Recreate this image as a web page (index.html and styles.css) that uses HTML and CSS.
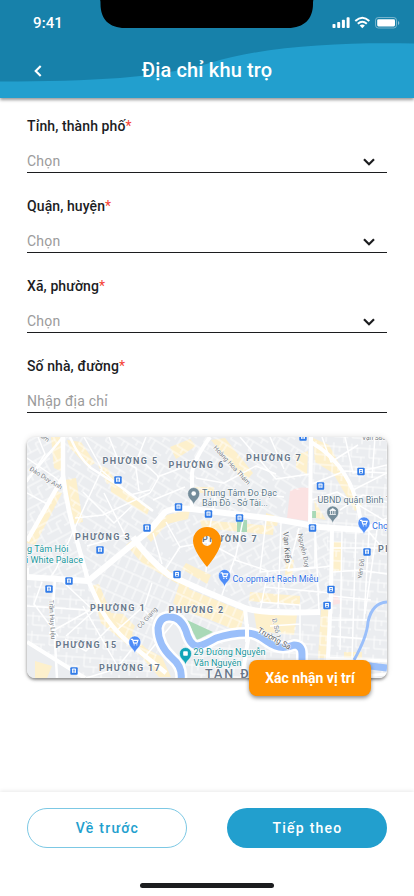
FILE: index.html
```html
<!DOCTYPE html>
<html lang="vi">
<head>
<meta charset="utf-8">
<meta name="viewport" content="width=device-width, initial-scale=1">
<title>Địa chỉ khu trọ</title>
<link rel="stylesheet" href="styles.css">
</head>
<body>
<div class="screen">
  <header class="header">
    <svg class="wave" viewBox="0 0 414 98" aria-hidden="true"><path d="M0 0H414V43.5C340 42 265 46 210 63C158 78 92 81.5 0 81.5Z" fill="#1781AA"/></svg>
    <svg class="notch" viewBox="0 0 214 28" aria-hidden="true"><path d="M0 0H213.500Q213 0 213 4C213 19 204 28 188 28H25C9 28 .5 19 .5 4Q.5 0 0 0Z"/></svg>
    <div class="status">
      <span class="time">9:41</span>
      <svg class="indicators" width="68" height="14" viewBox="0 0 68 14" fill="#fff" aria-hidden="true">
        <rect x="0.5" y="8" width="3" height="4" rx=".8"/><rect x="5.2" y="6" width="3" height="6" rx=".8"/><rect x="9.9" y="3.7" width="3" height="8.3" rx=".8"/><rect x="14.6" y="1.3" width="3" height="10.7" rx=".8"/>
        <g fill="none" stroke="#fff" stroke-width="2"><path d="M23.3 5.1Q30.3-1.5 37.3 5.1"/><path d="M25.8 7.8Q30.3 3.7 34.8 7.8"/></g><path d="M27.7 9.6Q30.3 7.5 32.9 9.6L30.3 12.3Z"/>
        <rect x="43.5" y="1.5" width="21" height="10.5" rx="2.8" fill="none" stroke="#fff" stroke-opacity=".4"/><rect x="45.2" y="3.2" width="17.8" height="7.2" rx="1.3"/><path d="M66 5v4q1.3-.6 1.3-2T66 5" opacity=".5"/>
      </svg>
    </div>
    <div class="titlebar">
      <svg class="back" width="10" height="14" viewBox="0 0 10 14" aria-hidden="true"><path d="M7.7 2L2.700 7L7.700 12" fill="none" stroke="#fff" stroke-width="2.100"/></svg>
      <h1>Địa chỉ khu trọ</h1>
    </div>
  </header>

  <main class="form">
    <div class="field"><label>Tỉnh, thành phố<i>*</i></label><div class="control"><span>Chọn</span><svg width="14" height="10" viewBox="0 0 14 10"><path d="M2 2.2L7 7.2L12 2.2"/></svg></div></div>
    <div class="field"><label>Quận, huyện<i>*</i></label><div class="control"><span>Chọn</span><svg width="14" height="10" viewBox="0 0 14 10"><path d="M2 2.2L7 7.2L12 2.2"/></svg></div></div>
    <div class="field"><label>Xã, phường<i>*</i></label><div class="control"><span>Chọn</span><svg width="14" height="10" viewBox="0 0 14 10"><path d="M2 2.2L7 7.2L12 2.2"/></svg></div></div>
    <div class="field"><label>Số nhà, đường<i>*</i></label><div class="control"><span>Nhập địa chỉ</span></div></div>

    <div class="map-card">
      <svg class="map" viewBox="27 437 360 241" role="img" aria-label="Bản đồ">
        <defs>
          <pattern id="gridA" width="21" height="17" patternUnits="userSpaceOnUse" patternTransform="rotate(32)"><path d="M0 2H21M8 2V12H21M15 12V17M3 2V8" class="lane"/></pattern>
          <pattern id="gridB" width="19" height="20" patternUnits="userSpaceOnUse" patternTransform="rotate(-28)"><path d="M0 3H19M5 3V14M0 14H13M13 8V20M13 8H19" class="lane"/></pattern>
          <pattern id="gridC" width="18" height="19" patternUnits="userSpaceOnUse" patternTransform="rotate(4)"><path d="M0 4H18M4 0V13H14V19M10 4V9M14 13H18" class="lane"/></pattern>
          <pattern id="gridD" width="9" height="13" patternUnits="userSpaceOnUse" patternTransform="rotate(24)"><path d="M0 2H9M4 2V13" class="lane"/></pattern>
          <g id="stop"><rect x="-3.7" y="-3.7" width="7.4" height="7.4" rx="1" fill="#317be8"/><rect x="-2" y="-2.4" width="4" height="4.3" rx=".6" fill="#fff"/><path d="M-1.2-.8H1.2M-1.2 1H1.2" stroke="#317be8" stroke-width=".9"/></g>
          <path id="pin" d="M0 8.500C-1 3.500-6 2.500-6-3A6 6 0 0 1 6-3C6 2.500 1 3.500 0 8.500Z"/>
          <path id="cart" d="M-3.500-5.600H-2.300L-1.100-1.900H2.100L3.100-4.600H-1.800M-.7-.2h.1M2-.2h.1" fill="none" stroke="#fff" stroke-width="1.2" stroke-linecap="round"/>
        </defs>
        <rect x="27" y="437" width="360" height="241" fill="#ebedf0"/>

        <g fill="#fdf0cc">
          <path d="M51 437h9l3 35-9-4zM67 440l14 2 14 21-7 4-18-19zM65 480l11-2 7 44-9 2zM54 490l8 3-27 52-8-2v-6zM98 465l9 3 9 13-9 3zM110 481l40 26-3 8-36-23z"/>
          <path d="M170 447l20-8 6 7-20 13zM211 440l14-2 28 35-8 9zM194 487h20v6h-20zM146 536l21-21 23-5-2 9-21 5-16 18zM200 520l74 6-1 9-71-7zM131 541l15 15 45 28-3 6-46-27-16-18z"/>
          <path d="M313 438l16 7 33 61-7 5-22-38-18-11zM296 455l12-4-1 24-11-7zM266 513l13 4-2 9-11-1zM314 500l12 20-10-2z"/>
          <path d="M90 586l9-2 12 29 12 1 12 12-3 8 22 23-5 6-48-40zM35 661l17 5-5 12H35zM145 648l17 9 9 20h-12l-15-17z"/>
          <path d="M179 585l66 27-5 20-32-13-24-8-11-8zM250 592l50 4v9l-51-4zM254 613l43 2-3 20-37-4zM186 563l25 12-4 9-25-15zM321 610l8-1-3 49h-8zM333 542h9l-1 30h-9zM344 652h18v8h-18zM286 559l8 1-2 17-7-2z"/>
        </g>
        <path d="M290 491q9-5 19-3v33l-22-3zM334 592l8 11-9 2z" fill="#fbe2e2"/>

        <path d="M27 437h36l1 40-37 60z" fill="url(#gridB)"/>
        <path d="M64 437h128v68l-54 28-50 48-15-60z" fill="url(#gridA)"/>
        <path d="M27 537l37-58 25 102-62-4z" fill="url(#gridB)"/>
        <path d="M27 580l61 4 24 43 38 39v12H80l-53-36z" fill="url(#gridC)"/>
        <path d="M192 437h119v50l-24 5-2 25-93-6z" fill="url(#gridA)"/>
        <path d="M311 437h76v241h-60V527l-17-4z" fill="url(#gridC)"/>
        <path d="M90 582l50-45 105 72v28l-48 7-30-28-16 60z" fill="url(#gridD)"/>
        <path d="M155 531l37-16 139 12-2 84-84-3z" fill="url(#gridB)"/>
        <path d="M183 640l65 5 79-30v63H183z" fill="url(#gridC)"/>
        <path d="M237 520h10v12H237zM312 511h4v7h-4zM187 620L213 632L197 640Z" fill="#a9d9b7"/>

        <g fill="none" stroke="#fff" stroke-width="1.500" stroke-linejoin="round">
          <path d="M27 458l29 20 5 5M27 493l22 12M38 437l7 17-18 28M84 437l18 32-14 30-32 70-6 9M100 469l30 26 20-5M75 518l28-3 47-22M83 492l31 31 18-17M104 493l21 42-38 11"/>
          <path d="M109 437l8 20 19 11 3 23M146 437l-8 20 21 20-9 16M157 477l35-13M153 500l32-13M196 478l28 5 32-17 20 8M240 437l36 42 34-5M257 493l27 4M270 437l14 32M216 490l-3 22"/>
          <path d="M27 606l44 3 28 2M42 582l-8 22 24 32M62 581l30 28-43 24M66 636l31-28M83 606l35 61M111 626l-25 25-21-12M116 631l29-26 7-22M132 649l-16 20-30 9M144 658l35-42M140 606l13 13"/>
          <path d="M153 533l9 31M166 522l14 25-15 23M180 547l28-5-2 30M212 516l-5 26 28 15-13 38M243 520l-8 40 33 11-8 40M266 520l-6 52 55-5v-36M281 523l-3 85M299 528l-11 43 43-5M265 587l66 6M260 602l40 3v35M270 626l30-2M315 523l4 88"/>
          <path d="M333 548h54M333 572l26-2 28 4M342 531l-2 119M356 530l-4 130M369 531l-5 90M377 530l-12 84M333 596l38 4M330 620h37M329 636l38 3M312 484l33-13 42 2M322 437l9 25 27-17M345 437l8 36 34-8M353 490l34-17M340 510l23-15 24 7M312 500l25-8 50 30M375 437l-3 41M366 528l21-10M368 531l19 22"/>
        </g>
        <g fill="none" stroke="#fff" stroke-linejoin="round">
          <path d="M70 437Q79 458 91 468L121 487L153 511M55 580L53 606L57 678M27 480L63 437" stroke-width="2.500"/>
          <path d="M133 537Q147 558 169 575Q205 592 245 608Q260 614 320 612" stroke-width="6"/>
          <path d="M63 437V475Q66 501 73 527L88 580L102 611Q111 627 128 642L166 673M63 477L27 541" stroke-width="4.500"/>
          <path d="M27 577L88 581L123 552L150 530L165 512Q174 507 192 509L275 519L320 527L362 530L387 522" stroke-width="6"/>
          <path d="M192 509V473Q194 459 210 437M311 437L310 525M311 442Q333 455 345 475Q358 495 362 530M332 527L331 596L327 678M27 642L85 678M245 608L248 640L242 678M27 568V580" stroke-width="4"/>
          <path d="M327 658L387 661M340 678L387 674" stroke-width="3"/>
        </g>
        <g fill="none" stroke-linejoin="round">
          <path d="M181 680Q183 667 172 658Q158 645 158 628Q160 616 170 617Q181 617 186 631Q190 646 198 646Q204 645 216 638Q231 633 247 633Q257 633 268 642Q280 651 294 645Q302 645 302 654V664" stroke="#fff" stroke-width="12"/>
          <path d="M181 680Q183 667 172 658Q158 645 158 628Q160 616 170 617Q181 617 186 631Q190 646 198 646Q204 645 216 638Q231 633 247 633Q257 633 268 642Q280 651 294 645Q302 645 302 654V664" stroke="#9abffa" stroke-width="7"/>
          <path d="M387 602Q372 603 368 622Q367 637 354 660" stroke="#9abffa" stroke-width="3"/><path d="M355 664Q370 666 387 668" stroke="#9abffa" stroke-width="7"/>
          <path d="M247 624V642" stroke="#fff" stroke-width="4"/>
        </g>

        <g class="road-name">
          <text transform="translate(29 470) rotate(32)">Đào Duy Anh</text>
          <text transform="translate(40 437) rotate(36)">am</text>
          <text transform="translate(213 448) rotate(47)">Hoàng Hoa Thám</text>
          <text transform="translate(49 600) rotate(87)">Trần Huy Liệu</text>
          <text transform="translate(140 629) rotate(-48)">Cô Giang</text>
          <text class="strong" transform="translate(283 532) rotate(85)">Vạn Kiếp</text>
          <text transform="translate(298 534) rotate(78)">Nguyễn Duy</text>
          <text transform="translate(362 579) rotate(-83)">Yên Đỗ</text>
          <text transform="translate(272 619) rotate(77)">D. Số 1</text>
          <text class="strong" transform="translate(257 632) rotate(29)">Trường Sa</text>
          <text x="362" y="440">Vạn Sắc</text>
        </g>
        <g class="ward">
          <text x="102.500" y="463.500" textLength="56">PHƯỜNG 5</text>
          <text x="168.500" y="467.500" textLength="56">PHƯỜNG 6</text>
          <text x="246" y="461" textLength="56">PHƯỜNG 7</text>
          <text x="202" y="542" textLength="56">PHƯỜNG 7</text>
          <text x="75" y="540" textLength="56">PHƯỜNG 3</text>
          <text x="90" y="611" textLength="56">PHƯỜNG 1</text>
          <text x="168.500" y="612.500" textLength="56">PHƯỜNG 2</text>
          <text x="55.500" y="648" textLength="62">PHƯỜNG 15</text>
          <text x="99" y="671" textLength="62">PHƯỜNG 17</text>
          <text x="378" y="552">PH</text>
          <text class="district" x="205" y="678">TÂN Đ</text>
        </g>
        <g class="place">
          <text x="202" y="495.500" textLength="75">Trung Tâm Đo Đạc</text><text x="202" y="506" textLength="66">Bản Đồ - Sở Tài...</text>
          <text x="317.500" y="503" textLength="66">UBND quận Bình</text><text x="386" y="503">T</text>
          <g class="teal"><text x="22" y="552" textLength="46.500">ng Tâm Hội</text><text x="26" y="563" textLength="57">i White Palace</text><text x="193.500" y="655" textLength="72">29 Đường Nguyễn</text><text x="193.500" y="665.500" textLength="48">Văn Nguyên</text></g>
          <g class="shop"><text x="232.500" y="582" textLength="86">Co.opmart Rạch Miễu</text><text x="372" y="529">Chợ</text></g>
        </g>
        <use href="#stop" x="118" y="480"/><use href="#stop" x="147" y="528"/><use href="#stop" x="100" y="550"/><use href="#stop" x="178.500" y="507"/><use href="#stop" x="208.500" y="514"/><use href="#stop" x="239.500" y="518"/><use href="#stop" x="303" y="437"/><use href="#stop" x="361" y="471.500"/><use href="#stop" x="320.500" y="486"/><use href="#stop" x="312.500" y="528"/><use href="#stop" x="367" y="552"/><use href="#stop" x="177" y="574.500"/><use href="#stop" x="69" y="581"/><use href="#stop" x="49" y="589"/><use href="#stop" x="74" y="671"/><use href="#stop" x="331" y="589.500"/><use href="#stop" x="327" y="605.500"/>
        <g stroke="#fff" stroke-width=".5">
          <use href="#pin" x="193.700" y="496.500" fill="#748c9a"/><use href="#pin" x="332.700" y="515" fill="#748c9a"/>
          <use href="#pin" x="364" y="526" fill="#4f8df7"/><use href="#pin" x="224.500" y="578.500" fill="#4f8df7"/><use href="#pin" x="134.800" y="645" fill="#4f8df7"/>
          <use href="#pin" x="185.500" y="656.500" fill="#12a5b8"/>
        </g>
        <circle cx="193.700" cy="493.500" r="2.300" fill="#fff"/><path d="M329.700 510.500l3-2 3 2zM329.500 514.500h6.400M330.500 511v3m2.200-3v3m2.200-3v3" stroke="#fff" fill="#fff" stroke-width=".8"/>
        <use href="#cart" x="364" y="526"/><use href="#cart" x="224.500" y="578.500"/><use href="#cart" x="134.800" y="645"/><rect x="183.200" y="651.200" width="4.600" height="4.600" rx=".8" fill="#fff"/>
        <path fill="#ff9100" fill-rule="evenodd" d="M207 567C202 561 193 549 193 541A14 14 0 0 1 221 541C221 549 212 561 207 567ZM207 536a5 5 0 1 0 0 10a5 5 0 1 0 0-10Z"/>
      </svg>
      <button class="confirm">Xác nhận vị trí</button>
    </div>
  </main>

  <footer class="footer">
    <div class="actions"><button class="btn outline">Về trước</button><button class="btn primary">Tiếp theo</button></div>
    <div class="home"></div>
  </footer>
</div>
</body>
</html>
```
FILE: styles.css
```css
* { box-sizing: border-box; }
body { margin: 0; background: #fff; color: #1c1d1f; font-family: Roboto, "Liberation Sans", sans-serif; }
button { border: 0; padding: 0; font-family: inherit; }
.screen { width: 414px; height: 896px; display: flex; flex-direction: column; overflow: hidden; }

.header { position: relative; flex: none; height: 98px; background: #229fce; color: #fff; box-shadow: 0 2px 3px rgba(0, 0, 0, .4); }
.wave { position: absolute; top: 0; left: 0; width: 414px; height: 98px; }
.notch { position: absolute; top: 0; left: 100px; width: 214px; height: 28px; }
.status { position: relative; height: 46px; padding: 0 14px 0 33px; display: flex; justify-content: space-between; align-items: center; }
.time { font-size: 15px; font-weight: 500; letter-spacing: .1px; }
.indicators { display: block; }
.titlebar { position: relative; height: 48px; display: flex; align-items: center; justify-content: center; }
.titlebar h1 { margin: 0; font-size: 20px; font-weight: 500; letter-spacing: .15px; }
.back { position: absolute; left: 33px; top: 18px; }

.form { flex: 1; padding: 18px 27px 0; }
.field { height: 80px; }
.field label { display: block; font-size: 14px; font-weight: 500; line-height: 20px; letter-spacing: .1px; }
.field i { color: #f44336; font-style: normal; font-weight: 400; }
.control { height: 37px; padding: 15px 11px 0 0; display: flex; justify-content: space-between; border-bottom: 1px solid #1c1d1f; color: #9b9b9b; font-size: 14px; line-height: 20px; letter-spacing: .25px; }
.control svg { margin-top: 6px; fill: none; stroke: #1c1d1f; stroke-width: 2.2; }

.map-card { position: relative; width: 360px; height: 241px; margin-top: 1px; border-radius: 8px; box-shadow: 0 2px 3px rgba(0, 0, 0, .4), 0 0 6px rgba(0, 0, 0, .12); }
.map { display: block; width: 360px; height: 241px; border-radius: 8px; }
.lane { fill: none; stroke: #fff; stroke-width: 1; stroke-opacity: .85; }
.road-name { font-size: 6.5px; fill: #777d84; stroke: #fff; stroke-width: 1px; paint-order: stroke; }
.road-name .strong { font-size: 8px; fill: #5f656b; }
.ward { font-size: 9px; font-weight: 700; letter-spacing: 1.4px; fill: #68788b; stroke: #fff; stroke-width: 1px; paint-order: stroke; }
.ward .district { font-size: 12.5px; letter-spacing: 2px; font-weight: 500; }
.place { font-size: 9px; letter-spacing: .1px; fill: #5b7888; stroke: #fff; stroke-width: 1px; paint-order: stroke; }
.place .teal { fill: #15959b; }
.place .shop { fill: #2f70e6; }
.confirm { position: absolute; right: 16px; bottom: -18px; width: 122px; height: 36px; border-radius: 8px; background: #ff9100; color: #fff; font-size: 14px; font-weight: 700; box-shadow: 0 2px 4px rgba(0, 0, 0, .45); }

.footer { flex: none; height: 104px; padding: 16px 27px 0; display: flex; flex-direction: column; align-items: center; background: #fff; box-shadow: 0 -1px 4px rgba(0, 0, 0, .09); }
.actions { width: 100%; display: flex; justify-content: space-between; }
.btn { width: 160px; height: 40px; padding-left: 1px; border-radius: 20px; font-size: 14px; font-weight: 500; letter-spacing: 1.25px; }
.outline { background: #fff; border: 1px solid #7cc8e4; color: #229fce; }
.primary { background: #229fce; color: #fff; }
.home { width: 134px; height: 5px; margin-top: 35px; border-radius: 3px; background: #1c1d1f; }
```
